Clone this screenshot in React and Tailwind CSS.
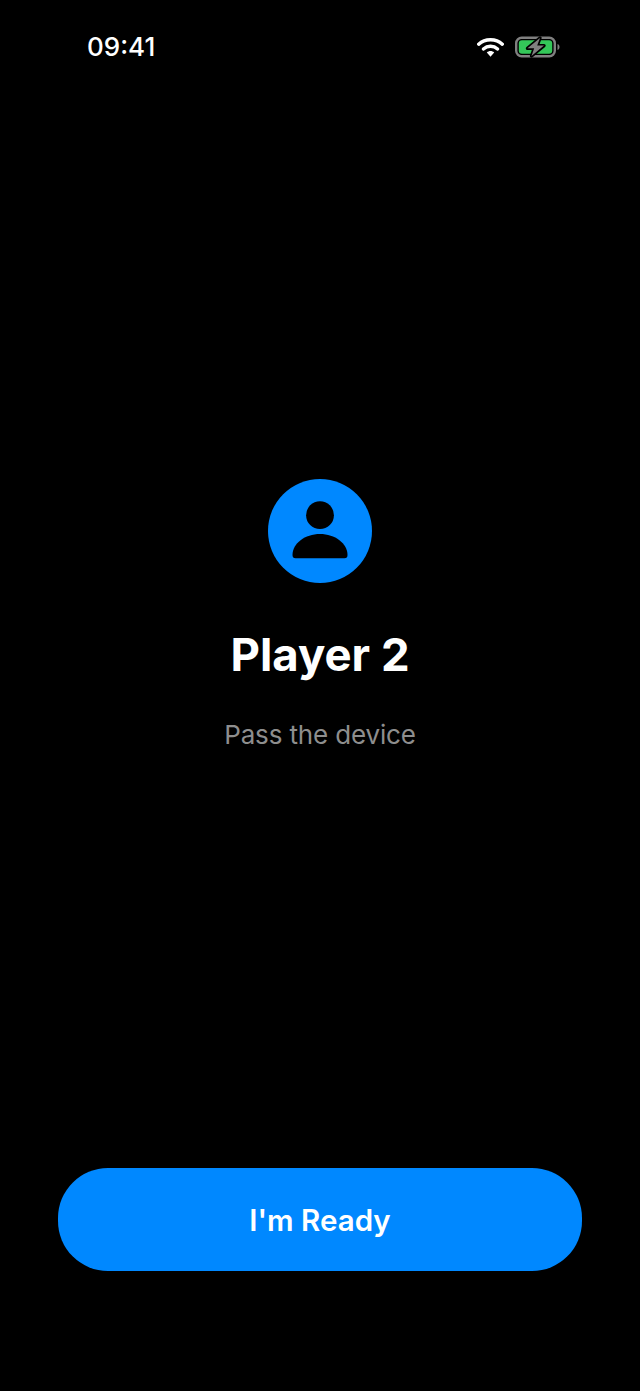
const StatusBar = () => (
  <div className="flex items-center justify-between h-[94px] pl-[87px] pr-[80px] pb-[1px]">
    <span className="text-[26px] font-medium text-white">09:41</span>
    <div className="flex items-center gap-[11px]">
      {/* wifi */}
      <svg width="27" height="20" viewBox="0 0 27 20" fill="none">
        <path d="M1.7 7.2 C8 1.2 19 1.2 25.3 7.2" stroke="#fff" strokeWidth="3.4" strokeLinecap="round" />
        <path d="M6.4 12 C10.5 8.4 16.5 8.4 20.6 12" stroke="#fff" strokeWidth="3.4" strokeLinecap="round" />
        <path d="M9.8 15.6 L13.5 19.8 L17.2 15.6 C15 13.6 12 13.6 9.8 15.6 Z" fill="#fff" />
      </svg>
      {/* battery charging */}
      <svg width="45" height="22" viewBox="0 0 45 22" fill="none">
        <rect x="1.2" y="1.7" width="38.6" height="18.6" rx="5.5" stroke="#808080" strokeWidth="2.4" />
        <rect x="3.8" y="4.2" width="33.4" height="13.6" rx="3.2" fill="#34c759" />
        <path d="M42.5 8 C44 8.5 44.5 9.8 44.5 11 C44.5 12.2 44 13.5 42.5 14 Z" fill="#808080" />
        <path d="M25 2 L12.5 12.3 H19.2 L16.5 20 L29 9.6 H22.2 Z" fill="#808080" stroke="#000" strokeWidth="3.4" strokeLinejoin="round" paintOrder="stroke" />
      </svg>
    </div>
  </div>
);

const PlayerIcon = () => (
  <div className="flex items-center justify-center w-[104px] h-[104px] rounded-full bg-[#0088ff]">
    <svg width="56" height="60" viewBox="0 0 56 60" fill="#000">
      <circle cx="28" cy="14.2" r="13.9" />
      <path d="M0.5 54 C0.5 42.5 13 33 28 33 C43 33 55.5 42.5 55.5 54 C55.5 56.3 54.5 57.3 52.5 57.3 H3.5 C1.5 57.3 0.5 56.3 0.5 54 Z" />
    </svg>
  </div>
);

export default function App() {
  return (
    <div className="flex flex-col h-[1391px] bg-black font-['Inter',sans-serif]">
      <StatusBar />

      <div className="flex flex-col items-center pt-[385px]">
        <PlayerIcon />
        <h1 className="mt-[42px] text-[45.5px] leading-[60px] font-bold text-white">Player 2</h1>
        <p className="mt-[34px] text-[26px] leading-[32px] tracking-[-0.15px] text-[#8e8e8e]">Pass the device</p>
      </div>

      <div className="flex-1" />

      <div className="px-[58px] pb-[120px]">
        <button className="w-full h-[103px] pt-[1px] rounded-[50px] bg-[#0088ff] text-[29.5px] font-semibold text-white">
          I'm Ready
        </button>
      </div>
    </div>
  );
}
